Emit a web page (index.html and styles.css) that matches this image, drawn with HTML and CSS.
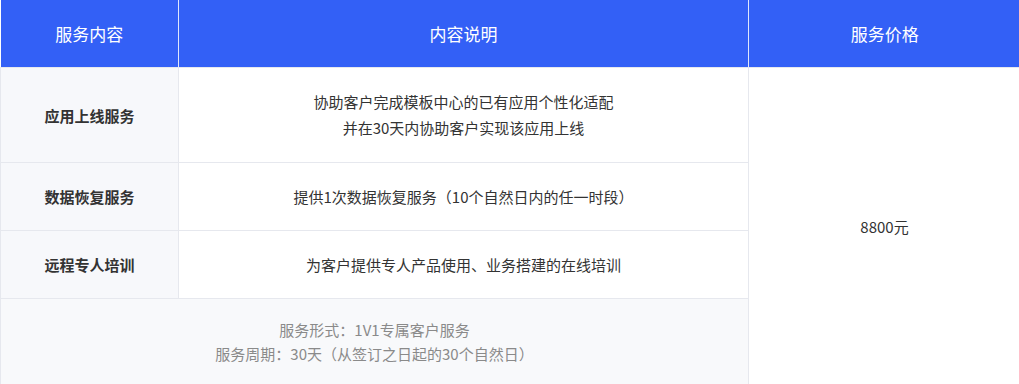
FILE: index.html
```html
<!doctype html>
<html lang="zh-CN">
<head>
    <meta charset="UTF-8">
    <title>服务内容</title>
    <link rel="stylesheet" href="styles.css">
</head>
<body>
    <table class="service-table">
        <colgroup>
            <col class="col-name">
            <col class="col-desc">
            <col class="col-price">
        </colgroup>
        <thead>
            <tr>
                <th>服务内容</th>
                <th>内容说明</th>
                <th>服务价格</th>
            </tr>
        </thead>
        <tbody>
            <tr class="row-tall">
                <td class="name">应用上线服务</td>
                <td class="desc">协助客户完成模板中心的已有应用个性化适配<br>并在30天内协助客户实现该应用上线</td>
                <td class="price" rowspan="4">8800元</td>
            </tr>
            <tr>
                <td class="name">数据恢复服务</td>
                <td class="desc">提供1次数据恢复服务（10个自然日内的任一时段）</td>
            </tr>
            <tr>
                <td class="name">远程专人培训</td>
                <td class="desc">为客户提供专人产品使用、业务搭建的在线培训</td>
            </tr>
            <tr class="row-note">
                <td class="note" colspan="2">服务形式：1V1专属客户服务<br>服务周期：30天（从签订之日起的30个自然日）</td>
            </tr>
        </tbody>
    </table>
</body>
</html>
```

FILE: styles.css
```css
* {margin:0; padding:0;}
body {
    font-family: "Noto Sans CJK SC", "Noto Sans", sans-serif;
    background: #fff;
}
.service-table {
    width: 1020px;
    border-collapse: collapse;
    table-layout: fixed;
    text-align: center;
}
.col-name {width: 178px;}
.col-desc {width: 570px;}
.col-price {width: 272px;}

.service-table th {
    height: 67px;
    background: #3360f6;
    color: #fff;
    font-size: 17px;
    font-weight: normal;
    border-right: 1px solid #dfe6fd;
}
.service-table th:last-child {border-right: none;}

.service-table td {
    border: 1px solid #e6e8ee;
    font-size: 15px;
    color: #333;
    height: 67px;
}
.row-tall td {height: 94px;}
.name {
    background: #f7f8fb;
    font-weight: bold;
    color: #222;
}
.desc {line-height: 26px;}
.price {background: #fff;}
.service-table td.note {
    height: 85px;
    background: #f8f9fb;
    color: #8a8a8a;
    line-height: 24px;
}
```
